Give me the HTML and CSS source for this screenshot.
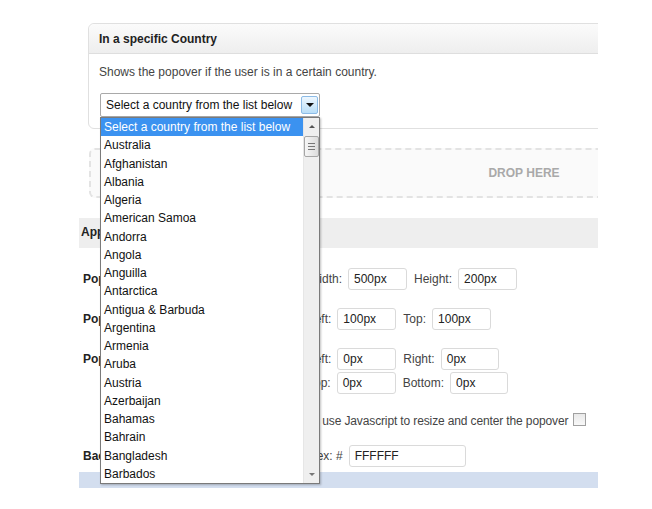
FILE: index.html
```html
<!DOCTYPE html>
<html>
<head>
<meta charset="utf-8">
<link rel="stylesheet" href="styles.css">
</head>
<body>
<div class="page">
  <section class="card">
    <div class="card-head">In a specific Country</div>
    <div class="card-body">
      <p class="desc">Shows the popover if the user is in a certain country.</p>
      <div class="select-wrap">
        <div class="select">
          <span>Select a country from the list below</span>
          <span class="select-btn"><span class="tri-down"></span></span>
        </div>
      </div>
    </div>
  </section>

  <div class="drop">DROP HERE</div>

  <div class="bar">Appearance</div>

  <div class="form">
    <div class="row r1">
      <div class="lbl">Popover Size</div>
      <div class="fields">
        <div class="line"><span class="t">Width:</span><span class="inp w59">500px</span><span class="t">Height:</span><span class="inp w59">200px</span></div>
      </div>
    </div>
    <div class="row r2">
      <div class="lbl">Popover Position</div>
      <div class="fields">
        <div class="line"><span class="t">Left:</span><span class="inp w59">100px</span><span class="t">Top:</span><span class="inp w59">100px</span></div>
      </div>
    </div>
    <div class="row r3">
      <div class="lbl">Popover Margins</div>
      <div class="fields">
        <div class="line"><span class="t">Left:</span><span class="inp w59">0px</span><span class="t">Right:</span><span class="inp w58">0px</span></div>
        <div class="line l2"><span class="t">Top:</span><span class="inp w59">0px</span><span class="t">Bottom:</span><span class="inp w58">0px</span></div>
      </div>
    </div>
    <div class="row r4">
      <div class="lbl"></div>
      <div class="fields">
        <div class="line"><span class="t tight">Or use Javascript to resize and center the popover</span><span class="check"></span></div>
      </div>
    </div>
    <div class="row r5">
      <div class="lbl">Background</div>
      <div class="fields">
        <div class="line"><span class="t">Hex: #</span><span class="inp w117">FFFFFF</span></div>
      </div>
    </div>
  </div>

  <div class="foot-bar"></div>
</div>

<div class="list">
  <ul class="items">
    <li class="sel">Select a country from the list below</li>
    <li>Australia</li>
    <li>Afghanistan</li>
    <li>Albania</li>
    <li>Algeria</li>
    <li>American Samoa</li>
    <li>Andorra</li>
    <li>Angola</li>
    <li>Anguilla</li>
    <li>Antarctica</li>
    <li>Antigua &amp; Barbuda</li>
    <li>Argentina</li>
    <li>Armenia</li>
    <li>Aruba</li>
    <li>Austria</li>
    <li>Azerbaijan</li>
    <li>Bahamas</li>
    <li>Bahrain</li>
    <li>Bangladesh</li>
    <li>Barbados</li>
  </ul>
  <div class="sbar">
    <div class="sb-up"><span class="tri-up"></span></div>
    <div class="sb-thumb"><span></span><span></span><span></span></div>
    <div class="sb-track"></div>
    <div class="sb-down"><span class="tri-down small"></span></div>
  </div>
</div>
</body>
</html>
```

FILE: styles.css
```css
* { box-sizing: border-box; }
html, body { margin: 0; padding: 0; background: #fff; }
body {
  font-family: "Liberation Sans", Arial, sans-serif;
  font-size: 12px;
  color: #222;
  width: 652px;
  height: 509px;
  overflow: hidden;
  position: relative;
}
.page {
  margin-left: 79px;
  width: 519px;
  padding-top: 23px;
  overflow: hidden;
}
.card {
  margin-left: 9px;
  width: 870px;
  border: 1px solid #e0e0e0;
  border-radius: 6px;
  background: #fff;
}
.card-head {
  height: 30px;
  line-height: 30px;
  padding-left: 10px;
  font-weight: bold;
  color: #222;
  background: linear-gradient(#fbfbfb, #eeeeee);
  border-bottom: 1px solid #dedede;
  border-radius: 6px 6px 0 0;
}
.card-body {
  padding: 10px 10px 11px 10px;
}
.desc {
  margin: 0;
  line-height: 16px;
  color: #444;
}
.select-wrap { margin-top: 13px; }
.select {
  width: 220px;
  height: 24px;
  margin-left: 1px;
  border: 1px solid #a9a9a9;
  border-radius: 2px;
  display: flex;
  align-items: center;
  justify-content: space-between;
  padding-left: 5px;
  padding-right: 1px;
  color: #111;
  background: #fff;
}
.select-btn {
  width: 17px;
  height: 18px;
  border: 1px solid #8cbbe6;
  border-radius: 2px;
  background: linear-gradient(#eef7fe, #b9def7);
  display: flex;
  align-items: center;
  justify-content: center;
}
.tri-down {
  width: 0; height: 0;
  border-left: 4px solid transparent;
  border-right: 4px solid transparent;
  border-top: 4px solid #111;
}
.tri-down.small {
  border-left-width: 3px;
  border-right-width: 3px;
  border-top: 3px solid #777;
}
.tri-up {
  width: 0; height: 0;
  border-left: 3px solid transparent;
  border-right: 3px solid transparent;
  border-bottom: 3px solid #555;
}
.drop {
  margin-top: 19px;
  margin-left: 10px;
  width: 870px;
  height: 50px;
  border: 2px dashed #e3e3e3;
  border-radius: 6px;
  background: #fafafa;
  text-align: center;
  line-height: 46px;
  font-weight: bold;
  color: #a9a9a9;
}
.bar {
  margin-top: 20px;
  height: 30px;
  line-height: 28px;
  padding-left: 2px;
  background: #eeeeee;
  font-weight: bold;
  color: #222;
}
.form { padding-left: 4px; }
.row { display: flex; align-items: flex-start; }
.lbl {
  width: 225px;
  flex: none;
  font-weight: bold;
  line-height: 22px;
  color: #222;
}
.fields { display: flex; flex-direction: column; }
.line { display: flex; align-items: center; height: 22px; color: #444; }
.line.l2 { margin-top: 2px; }
.t { margin-right: 6px; white-space: nowrap; }
.t.tight { letter-spacing: -0.13px; margin-left: -2px; margin-right: 5px; }
.inp {
  height: 22px;
  border: 1px solid #dadada;
  border-radius: 3px;
  padding-left: 5px;
  line-height: 20px;
  color: #222;
  margin-right: 7px;
}
.w59 { width: 59px; }
.w58 { width: 58px; }
.w117 { width: 117px; }
.r1 { margin-top: 20px; }
.r2 { margin-top: 18px; }
.r3 { margin-top: 18px; }
.r4 { margin-top: 16px; }
.r5 { margin-top: 13px; }
.check {
  width: 13px; height: 13px;
  border: 1px solid #a0a0a0;
  background: linear-gradient(#e9e9e9, #f8f8f8);
  margin-top: -3px;
}
.foot-bar {
  margin-top: 5px;
  height: 16px;
  background: #d3deef;
}

/* open dropdown list */
.list {
  position: absolute;
  left: 100px;
  top: 117px;
  width: 220px;
  height: 367px;
  border: 1px solid #7a7a7a;
  background: #fff;
  display: flex;
  box-shadow: 1px 1px 2px rgba(0,0,0,0.25);
}
.items {
  list-style: none;
  margin: 0;
  padding: 0;
  width: 202px;
  flex: none;
}
.items li {
  height: 18.25px;
  line-height: 18.25px;
  padding-left: 3px;
  color: #111;
  white-space: nowrap;
}
.items li.sel { background: #3b92f0; color: #fff; }
.sbar {
  width: 16px;
  flex: none;
  display: flex;
  flex-direction: column;
  background: #efefef;
  border-left: 1px solid #e6e6e6;
}
.sb-up, .sb-down {
  height: 17px;
  display: flex;
  align-items: center;
  justify-content: center;
}
.sb-thumb {
  margin: 1px 0 0 0;
  height: 21px;
  border: 1px solid #a6a6a6;
  border-radius: 2px;
  background: linear-gradient(90deg, #f6f6f6, #dcdcdc);
  display: flex;
  flex-direction: column;
  align-items: center;
  justify-content: center;
  gap: 2px;
}
.sb-thumb span { width: 7px; height: 1px; background: #777; }
.sb-track { flex: 1; }
```
